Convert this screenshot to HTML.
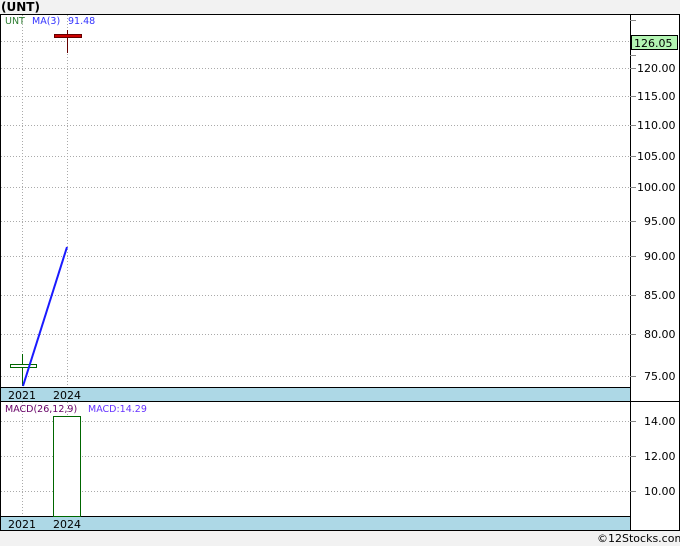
<!DOCTYPE html>
<html><head><style>
html,body{margin:0;padding:0;background:#f2f2f2;}
svg{display:block;font-family:"DejaVu Sans","Liberation Sans",sans-serif;}
</style></head><body>
<svg width="680" height="546" xmlns="http://www.w3.org/2000/svg">
<rect width="680" height="546" fill="#f2f2f2"/>
<text x="1" y="11" font-size="12" font-weight="bold" fill="#000">(UNT)</text>
<rect x="0.5" y="14.5" width="679" height="516" fill="#fff" stroke="#000"/>
<g stroke="#aaa" stroke-dasharray="1,2" stroke-width="1">
<line x1="1" y1="41.5" x2="630" y2="41.5"/>
<line x1="1" y1="68.5" x2="630" y2="68.5"/>
<line x1="1" y1="96.5" x2="630" y2="96.5"/>
<line x1="1" y1="125.5" x2="630" y2="125.5"/>
<line x1="1" y1="156.5" x2="630" y2="156.5"/>
<line x1="1" y1="187.5" x2="630" y2="187.5"/>
<line x1="1" y1="221.5" x2="630" y2="221.5"/>
<line x1="1" y1="256.5" x2="630" y2="256.5"/>
<line x1="1" y1="295.5" x2="630" y2="295.5"/>
<line x1="1" y1="334.5" x2="630" y2="334.5"/>
<line x1="1" y1="376.5" x2="630" y2="376.5"/>
<line x1="1" y1="421.5" x2="630" y2="421.5"/>
<line x1="1" y1="456.5" x2="630" y2="456.5"/>
<line x1="1" y1="491.5" x2="630" y2="491.5"/>
<line x1="22.5" y1="15" x2="22.5" y2="387"/>
<line x1="67.5" y1="15" x2="67.5" y2="387"/>
<line x1="22.5" y1="402" x2="22.5" y2="516"/>
<line x1="67.5" y1="402" x2="67.5" y2="516"/>
</g>
<rect x="1" y="387" width="629" height="14" fill="#add8e6"/>
<rect x="1" y="516" width="629" height="14" fill="#add8e6"/>
<line x1="0" y1="387.5" x2="630" y2="387.5" stroke="#000"/>
<line x1="0" y1="401.5" x2="680" y2="401.5" stroke="#000"/>
<line x1="0" y1="516.5" x2="630" y2="516.5" stroke="#000"/>
<line x1="630.5" y1="14" x2="630.5" y2="530" stroke="#000"/>
<g font-size="11" fill="#000">
<text x="8" y="399">2021</text><text x="53" y="399">2024</text>
<text x="8" y="528">2021</text><text x="53" y="528">2024</text>
</g>
<g stroke="#888"><line x1="630" y1="20.5" x2="636" y2="20.5"/><line x1="630" y1="55.5" x2="636" y2="55.5"/>
<line x1="630" y1="68.5" x2="636" y2="68.5"/><line x1="630" y1="96.5" x2="636" y2="96.5"/><line x1="630" y1="125.5" x2="636" y2="125.5"/><line x1="630" y1="156.5" x2="636" y2="156.5"/><line x1="630" y1="187.5" x2="636" y2="187.5"/><line x1="630" y1="221.5" x2="636" y2="221.5"/><line x1="630" y1="256.5" x2="636" y2="256.5"/><line x1="630" y1="295.5" x2="636" y2="295.5"/><line x1="630" y1="334.5" x2="636" y2="334.5"/><line x1="630" y1="376.5" x2="636" y2="376.5"/><line x1="630" y1="421.5" x2="636" y2="421.5"/><line x1="630" y1="456.5" x2="636" y2="456.5"/><line x1="630" y1="491.5" x2="636" y2="491.5"/></g>
<g font-size="11" fill="#000">
<text x="637" y="72">120.00</text><text x="637" y="100">115.00</text><text x="637" y="129">110.00</text>
<text x="637" y="160">105.00</text><text x="637" y="191">100.00</text><text x="644" y="225">95.00</text>
<text x="644" y="260">90.00</text><text x="644" y="299">85.00</text><text x="644" y="338">80.00</text>
<text x="644" y="380">75.00</text><text x="644" y="425">14.00</text><text x="644" y="460">12.00</text><text x="644" y="495">10.00</text>
</g>
<rect x="631.5" y="35.5" width="46" height="14" fill="#b3f5b3" stroke="#000"/>
<text x="634" y="47" font-size="11" fill="#000">126.05</text>
<text x="5" y="24" font-size="9.5" fill="#2e7d32">UNT</text>
<text x="32" y="24" font-size="9.5" fill="#3333ff">MA(3)</text>
<text x="68" y="24" font-size="9.5" fill="#3333ff">91.48</text>
<text x="5" y="412" font-size="9.5" fill="#660066">MACD(26,12,9)</text>
<text x="88" y="412" font-size="9.5" fill="#6633ff">MACD:14.29</text>
<line x1="67.5" y1="30" x2="67.5" y2="53" stroke="#600"/>
<rect x="54.5" y="34.5" width="27" height="3" fill="#c00" stroke="#600"/>
<line x1="22.5" y1="354" x2="22.5" y2="386" stroke="#060"/>
<rect x="10.5" y="364.5" width="26" height="3" fill="#fff" stroke="#060"/>
<line x1="23" y1="386" x2="67" y2="247" stroke="#1a1aff" stroke-width="2"/>
<rect x="53.5" y="416.5" width="27" height="100" fill="#fff" stroke="#060"/>
<text x="597" y="542" font-size="11" fill="#000">©12Stocks.com</text>
</svg>
</body></html>
